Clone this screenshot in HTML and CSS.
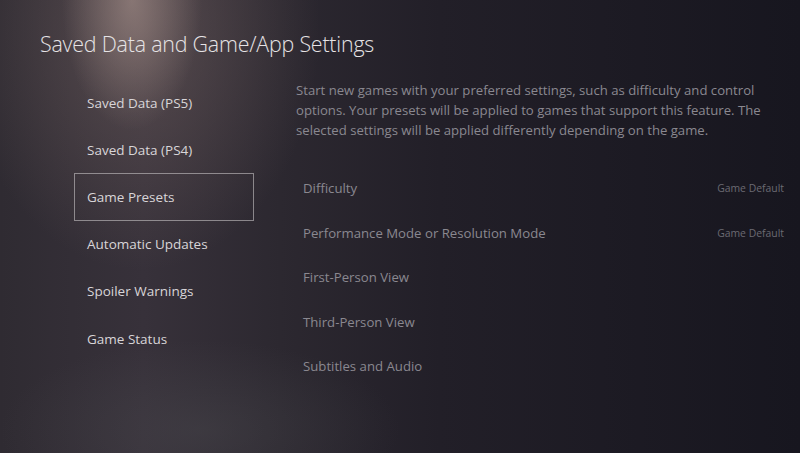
FILE: index.html
```html
<!DOCTYPE html>
<html lang="en">
<head>
    <meta charset="UTF-8">
    <meta name="viewport" content="width=device-width, initial-scale=1.0">
    <title>Saved Data and Game/App Settings</title>
    <link rel="stylesheet" href="styles.css">
</head>
<body>
    <div class="screen">
        <h1 class="title">Saved Data and Game/App Settings</h1>

        <div class="content">
            <!-- left menu -->
            <ul class="menu">
                <li class="menu-item">Saved Data (PS5)</li>
                <li class="menu-item">Saved Data (PS4)</li>
                <li class="menu-item selected">Game Presets</li>
                <li class="menu-item">Automatic Updates</li>
                <li class="menu-item">Spoiler Warnings</li>
                <li class="menu-item">Game Status</li>
            </ul>

            <!-- presets panel -->
            <div class="panel">
                <p class="description">Start new games with your preferred settings, such as difficulty and control options. Your presets will be applied to games that support this feature. The selected settings will be applied differently depending on the game.</p>
                <div class="options">
                    <div class="option">
                        <span class="option-name">Difficulty</span>
                        <span class="option-value">Game Default</span>
                    </div>
                    <div class="option">
                        <span class="option-name">Performance Mode or Resolution Mode</span>
                        <span class="option-value">Game Default</span>
                    </div>
                    <div class="option">
                        <span class="option-name">First-Person View</span>
                    </div>
                    <div class="option">
                        <span class="option-name">Third-Person View</span>
                    </div>
                    <div class="option">
                        <span class="option-name">Subtitles and Audio</span>
                    </div>
                </div>
            </div>
        </div>
    </div>
</body>
</html>
```

FILE: styles.css
```css
html, body {
    margin: 0;
    padding: 0;
}
body {
    width: 800px;
    height: 453px;
    overflow: hidden;
    font-family: "Open Sans", "Noto Sans", sans-serif;
    background-color: #1b1a22;
    /* spotlight from the top left, fading into a dark blue right side */
    background-image:
        radial-gradient(ellipse 70px 130px at 132px 0px, rgba(170, 148, 142, 0.6), rgba(170, 148, 142, 0) 100%),
        radial-gradient(ellipse 180px 240px at 140px 30px, rgba(120, 102, 100, 0.5), rgba(120, 102, 100, 0) 100%),
        radial-gradient(ellipse 200px 90px at 200px 430px, rgba(80, 80, 84, 0.35), rgba(80, 80, 84, 0) 100%),
        linear-gradient(90deg, #2f2b32 0%, #37313a 18%, #2c2830 35%, #221f28 55%, #17161f 100%);
}
.screen {
    padding: 31px 9px 0 40px;
    display: flex;
    flex-direction: column;
}
.title {
    margin: 0;
    font-size: 21.4px;
    font-weight: 300;
    line-height: 26px;
    color: #e6e3e5;
    letter-spacing: -0.2px;
}
.content {
    display: flex;
    margin-top: 22px;
}
.menu {
    list-style: none;
    margin: 0 0 0 34px;
    padding: 0;
    width: 180px;
}
.menu-item {
    height: 47.2px;
    box-sizing: border-box;
    display: flex;
    align-items: center;
    padding-left: 12px;
    font-size: 13.5px;
    color: #d8d5d8;
    border: 1.5px solid transparent;
}
.menu-item.selected {
    border-color: rgba(200, 196, 198, 0.6);
}
.panel {
    flex: 1;
    margin-left: 42px;
}
.description {
    margin: 1px 0 0;
    max-width: 475px;
    font-size: 13.15px;
    line-height: 20px;
    color: #8a8890;
}
.options {
    margin-top: 26px;
}
.option {
    height: 44.5px;
    display: flex;
    align-items: center;
    justify-content: space-between;
    padding: 0 7px;
}
.option-name {
    font-size: 13.2px;
    color: #8a8890;
}
.option-value {
    font-size: 10.4px;
    color: #6b6a72;
}
```
